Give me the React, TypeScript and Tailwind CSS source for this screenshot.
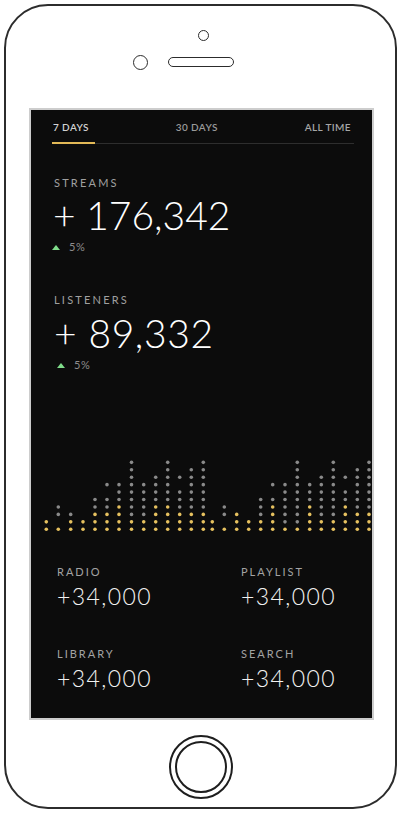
import React from "react";

type Col = { x: number; gold: number; gray: number[] };

const range = (a: number, b: number) => Array.from({ length: b - a + 1 }, (_, i) => a + i);

const bars: Col[] = [
  { x: 46.3, gold: 2, gray: [] },
  { x: 58.3, gold: 1, gray: [2, 3] },
  { x: 70.7, gold: 2, gray: [2] },
  { x: 83, gold: 2, gray: [] },
  { x: 95, gold: 3, gray: [3, 4] },
  { x: 107, gold: 3, gray: [3, 4, 6] },
  { x: 119, gold: 4, gray: [4, 5, 6] },
  { x: 131.5, gold: 2, gray: range(2, 9) },
  { x: 143.7, gold: 2, gray: range(2, 6) },
  { x: 155.7, gold: 4, gray: range(4, 7) },
  { x: 167.7, gold: 4, gray: range(4, 9) },
  { x: 179.7, gold: 3, gray: [3, 4, 5, 7] },
  { x: 191.3, gold: 3, gray: range(3, 8) },
  { x: 203.3, gold: 3, gray: range(3, 9) },
  { x: 212.3, gold: 2, gray: [] },
  { x: 224.3, gold: 1, gray: [2, 3] },
  { x: 236.7, gold: 3, gray: [] },
  { x: 248.7, gold: 2, gray: [] },
  { x: 260.7, gold: 2, gray: range(2, 4) },
  { x: 272.7, gold: 4, gray: [4, 6] },
  { x: 285, gold: 1, gray: range(1, 6) },
  { x: 297.3, gold: 1, gray: range(1, 9) },
  { x: 309.7, gold: 4, gray: range(4, 6) },
  { x: 321.3, gold: 2, gray: range(2, 7) },
  { x: 333.3, gold: 2, gray: range(2, 9) },
  { x: 345.3, gold: 4, gray: [4, 5, 7] },
  { x: 357.3, gold: 3, gray: range(3, 8) },
  { x: 369, gold: 3, gray: range(3, 9) },
];

function DotChart() {
  const cy = (i: number) => 74.3 - i * 7.44;
  return (
    <svg width="341" height="80" viewBox="0 0 341 80" className="mt-[83px] block">
      {bars.map((b, ci) => (
        <g key={ci}>
          {range(0, b.gold - 1).map((r) => (
            <circle key={"g" + r} cx={b.x - 31} cy={cy(r)} r="1.8" fill="#e6c15f" />
          ))}
          {b.gray.map((r) => (
            <circle key={"s" + r} cx={b.x - 31} cy={cy(r)} r="1.8" fill="#8a8a8a" />
          ))}
        </g>
      ))}
    </svg>
  );
}

function Change({ offset }: { offset: string }) {
  return (
    <div className={`flex items-center h-[14px] ${offset}`}>
      <span className="w-0 h-0 border-l-[4px] border-r-[4px] border-b-[5px] border-l-transparent border-r-transparent border-b-[#7fdc8a]" />
      <span className="ml-[9px] text-[11px] text-[#8c8c8c] tracking-[0.5px]">5%</span>
    </div>
  );
}

function Stat({ label, value }: { label: string; value: string }) {
  return (
    <div>
      <div className="text-[11px] leading-[14px] tracking-[2px] text-[#a3a3a3]">{label}</div>
      <div className="mt-[6px] text-[23px] leading-none font-light text-[#f2f2f2] tracking-[1.4px]">{value}</div>
    </div>
  );
}

export default function App() {
  return (
    <div className="w-[401px] h-[814px] bg-white pt-[4px] pl-[4px]" style={{ fontFamily: "Lato, 'Liberation Sans', sans-serif" }}>
      <div className="w-[393px] h-[805px] rounded-[44px] border-2 border-[#2c2c2c] flex flex-col">
        {/* sensors */}
        <div className="ml-[191.5px] mt-[23.5px] w-[11px] h-[11px] rounded-full border-[1.5px] border-[#2c2c2c]" />
        <div className="flex items-center ml-[126.5px] mt-[14px]">
          <div className="w-[15px] h-[15px] rounded-full border-[1.5px] border-[#2c2c2c]" />
          <div className="ml-[20.5px] w-[66px] h-[9.5px] rounded-full border-[1.5px] border-[#2c2c2c]" />
        </div>

        {/* screen */}
        <div className="ml-[23px] mt-[38.5px] w-[345px] h-[612px] border-2 border-[#cdcdcd] bg-[#0c0c0c] flex flex-col">
          <div className="flex justify-between pl-[22px] pr-[21px] pt-[11px] text-[10px] leading-[12px] font-semibold tracking-[0.4px]">
            <span className="text-[#d2d2d2]">7 DAYS</span>
            <span className="text-[#9a9a9a]">30 DAYS</span>
            <span className="text-[#a6a6a6]">ALL TIME</span>
          </div>
          <div className="ml-[21px] mt-[9px] w-[302px] flex items-center h-[2px]">
            <div className="w-[43px] h-[2px] bg-[#e3b957]" />
            <div className="flex-1 h-px bg-[#2e2e2e]" />
          </div>

          <div className="pl-[23px] mt-[32px] text-[11px] leading-[14px] tracking-[2.2px] text-[#a0a0a0]">STREAMS</div>
          <div className="pl-[22px] mt-[5.5px] text-[39px] leading-none font-light text-white">+ 176,342</div>
          <Change offset="mt-[5.5px] pl-[21px]" />

          <div className="pl-[23px] mt-[39px] text-[11px] leading-[14px] tracking-[2.2px] text-[#a0a0a0]">LISTENERS</div>
          <div className="pl-[23px] mt-[6.5px] text-[39px] leading-none font-light text-white tracking-[0.6px]">+ 89,332</div>
          <Change offset="mt-[5.5px] pl-[26px]" />

          <DotChart />

          <div className="mt-[30px] pl-[26px] grid grid-cols-[184px_1fr] gap-y-[38.5px]">
            <Stat label="RADIO" value="+34,000" />
            <Stat label="PLAYLIST" value="+34,000" />
            <Stat label="LIBRARY" value="+34,000" />
            <Stat label="SEARCH" value="+34,000" />
          </div>
        </div>

        {/* home button */}
        <div className="mt-[14.5px] ml-[162.5px] w-[64px] h-[64px] rounded-full border-2 border-[#1e1e1e] flex items-center justify-center">
          <div className="w-[52px] h-[52px] rounded-full border-2 border-[#1e1e1e]" />
        </div>
      </div>
    </div>
  );
}
